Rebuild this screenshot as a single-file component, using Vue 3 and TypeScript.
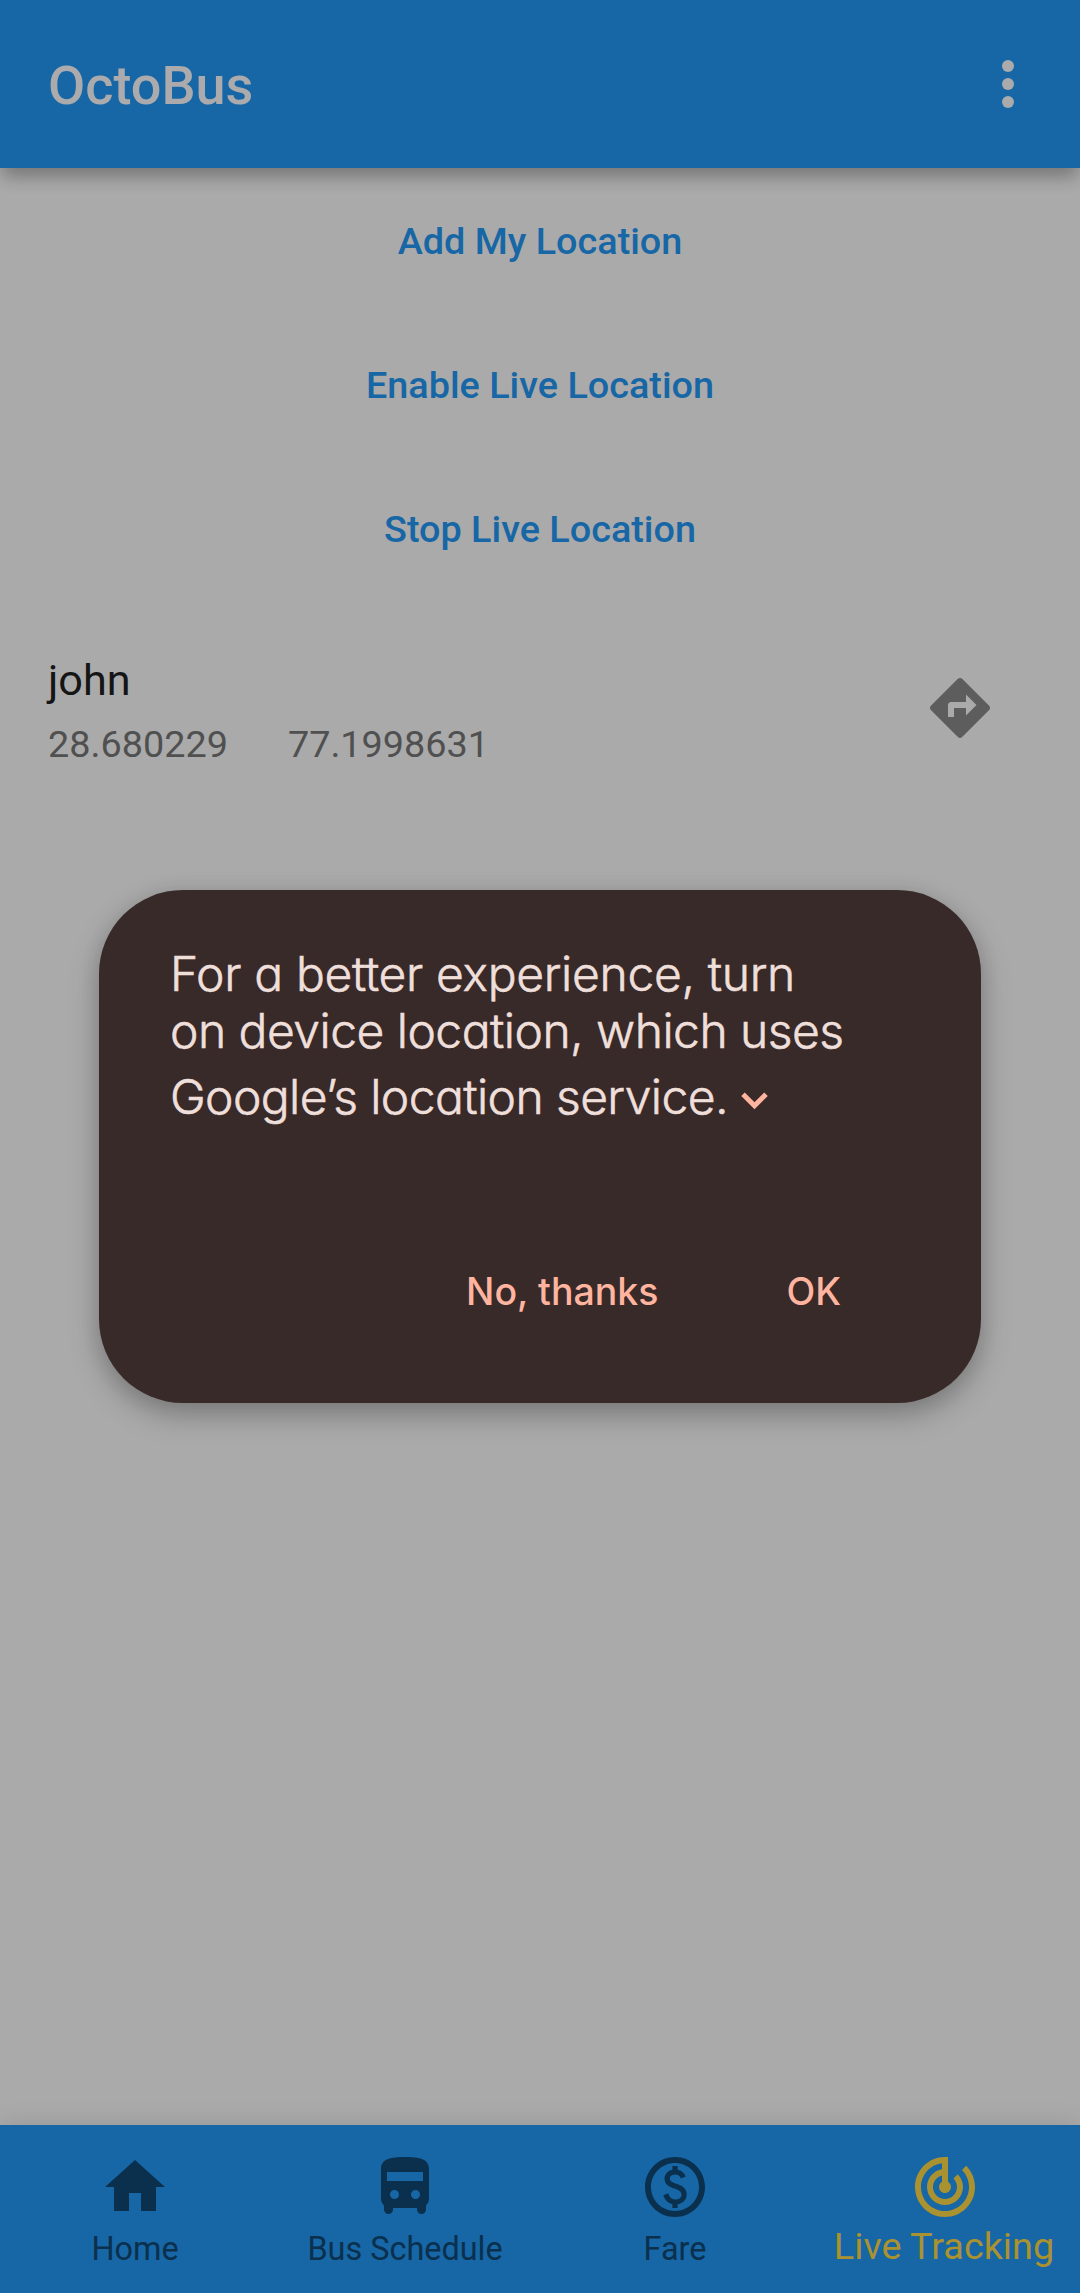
<script setup lang="ts">
interface NavItem {
  label: string
  icon: string
  active?: boolean
}

const actions: string[] = ['Add My Location', 'Enable Live Location', 'Stop Live Location']

const navItems: NavItem[] = [
  { label: 'Home', icon: 'M10 20v-6h4v6h5v-8h3L12 3 2 12h3v8z' },
  {
    label: 'Bus Schedule',
    icon: 'M12 2C7.58 2 4 2.5 4 6v9.8c0 .95.38 1.75 1 2.35v1.35c0 .83.67 1.5 1.5 1.5S8 20.33 8 19.5V19h8v.5c0 .83.67 1.5 1.5 1.5s1.5-.67 1.5-1.5v-1.35c.62-.6 1-1.4 1-2.35V6c0-3.5-3.58-4-8-4zM6 7h12v3H6zM8.5 16a1.5 1.5 0 1 1 0-3 1.5 1.5 0 0 1 0 3zM15.5 16a1.5 1.5 0 1 1 0-3 1.5 1.5 0 0 1 0 3z',
  },
  {
    label: 'Fare',
    icon: 'M12 2C6.48 2 2 6.48 2 12s4.48 10 10 10 10-4.48 10-10S17.52 2 12 2zm0 18c-4.41 0-8-3.59-8-8s3.59-8 8-8 8 3.59 8 8-3.59 8-8 8zm.89-8.9c-1.78-.59-2.64-.96-2.64-1.9 0-1.02 1.11-1.39 1.81-1.39 1.31 0 1.79.99 1.9 1.34l1.58-.67c-.15-.44-.82-1.91-2.66-2.23V5h-1.75v1.26c-2.6.56-2.62 2.85-2.62 2.96 0 2.27 2.25 2.91 3.35 3.31 1.58.56 2.28 1.07 2.28 2.03 0 1.13-1.05 1.61-1.98 1.61-1.82 0-2.34-1.87-2.4-2.09l-1.66.67c.63 2.19 2.28 2.78 3.02 2.96V19h1.75v-1.24c.52-.09 3.02-.59 3.02-3.22.01-1.39-.6-2.61-3-3.44z',
  },
  {
    label: 'Live Tracking',
    active: true,
    icon: 'M19.07 4.93l-1.41 1.41C19.1 7.79 20 9.79 20 12c0 4.42-3.58 8-8 8s-8-3.58-8-8c0-4.08 3.05-7.44 7-7.93v2.02C8.16 6.57 6 9.03 6 12c0 3.31 2.69 6 6 6s6-2.69 6-6c0-1.66-.67-3.16-1.76-4.24l-1.41 1.41C15.55 9.9 16 10.9 16 12c0 2.21-1.79 4-4 4s-4-1.79-4-4c0-1.86 1.28-3.41 3-3.86v2.14c-.6.35-1 .98-1 1.72 0 1.1.9 2 2 2s2-.9 2-2c0-.74-.4-1.38-1-1.72V2h-1C6.48 2 2 6.48 2 12s4.48 10 10 10 10-4.48 10-10c0-2.76-1.12-5.26-2.93-7.07z',
  },
]
</script>

<template>
  <div class="screen">
    <header class="app-bar">
      <h1>OctoBus</h1>
      <svg class="icon" viewBox="0 0 24 24">
        <circle cx="12" cy="6" r="2" />
        <circle cx="12" cy="12" r="2" />
        <circle cx="12" cy="18" r="2" />
      </svg>
    </header>

    <main class="body">
      <button v-for="action in actions" :key="action" class="text-button">{{ action }}</button>

      <div class="tile">
        <div class="tile-text">
          <div class="name">john</div>
          <div class="coords">
            <span>28.680229</span>
            <span>77.1998631</span>
          </div>
        </div>
        <svg class="icon directions" viewBox="0 0 24 24">
          <path
            d="M21.71 11.29l-9-9c-.39-.39-1.02-.39-1.41 0l-9 9c-.39.39-.39 1.02 0 1.41l9 9c.39.39 1.02.39 1.41 0l9-9c.39-.38.39-1.01 0-1.41zM14 14.5V12h-4v3H8v-4c0-.55.45-1 1-1h5V7.5l3.5 3.5-3.5 3.5z"
          />
        </svg>
      </div>
    </main>

    <nav class="bottom-nav">
      <div v-for="item in navItems" :key="item.label" class="nav-item" :class="{ active: item.active }">
        <svg class="icon" viewBox="0 0 24 24"><path fill-rule="evenodd" :d="item.icon" /></svg>
        <span class="nav-label">{{ item.label }}</span>
      </div>
    </nav>

    <div class="overlay">
      <section class="dialog" role="dialog">
        <div class="message">
          <div class="line first">For a better experience, turn</div>
          <div class="line">on device location, which uses</div>
          <div class="line last">
            <span>Google’s location service.</span>
            <svg class="chevron" viewBox="0 0 27 18"><path d="M2 2.2l11.5 11.5L25 2.2" /></svg>
          </div>
        </div>
        <div class="dialog-actions">
          <button>No, thanks</button>
          <button>OK</button>
        </div>
      </section>
    </div>
  </div>
</template>

<style>
body {
  margin: 0;
  background: #aaaaaa;
}
</style>

<style scoped>
.screen {
  position: relative;
  display: flex;
  flex-direction: column;
  width: 1080px;
  height: 2293px;
  overflow: hidden;
  background: #aaaaaa;
  font-family: Roboto, 'Liberation Sans', sans-serif;
}

button {
  padding: 0;
  border: 0;
  background: none;
  font: inherit;
  color: inherit;
}

.icon {
  display: block;
  width: 72px;
  height: 72px;
  flex: none;
  fill: currentColor;
}

.app-bar {
  display: flex;
  align-items: center;
  justify-content: space-between;
  box-sizing: border-box;
  height: 168px;
  padding: 0 36px 0 48px;
  background: #1766a5;
  color: #ababad;
  box-shadow: 0 12px 15px -3px rgba(0, 0, 0, 0.22), 0 3px 24px rgba(0, 0, 0, 0.12);
}

h1 {
  margin: 0;
  padding-top: 4px;
  font-size: 54px;
  font-weight: 500;
  line-height: 64px;
}

.body {
  flex: 1;
  display: flex;
  flex-direction: column;
}

.text-button {
  height: 144px;
  padding-top: 2px;
  font-size: 37.8px;
  font-weight: 500;
  line-height: 44px;
  color: #1766a5;
}

.tile {
  display: flex;
  align-items: center;
  justify-content: space-between;
  box-sizing: border-box;
  height: 216px;
  padding: 0 84px 0 48px;
}

.tile-text {
  padding-top: 6px;
}

.name {
  font-size: 43.2px;
  line-height: 50px;
  color: #151515;
}

.coords {
  display: flex;
  gap: 60px;
  margin-top: 16px;
  font-size: 37.8px;
  line-height: 44px;
  color: #505050;
}

.directions {
  color: #5d5d5d;
}

.bottom-nav {
  display: flex;
  height: 168px;
  background: #1766a5;
  box-shadow: 0 0 24px rgba(0, 0, 0, 0.12);
}

.nav-item {
  flex: 1;
  display: flex;
  flex-direction: column;
  align-items: center;
  box-sizing: border-box;
  padding-top: 26px;
  color: #0a304e;
}

.nav-label {
  margin-top: 7px;
  font-size: 32.4px;
  line-height: 38px;
  white-space: nowrap;
}

.active {
  color: #aa9230;
}

.active .nav-label {
  margin-top: 1px;
  margin-right: 2px;
  font-size: 37.8px;
  line-height: 44px;
}

.overlay {
  position: absolute;
  inset: 0;
  display: flex;
  align-items: center;
  justify-content: center;
}

.dialog {
  display: flex;
  flex-direction: column;
  justify-content: space-between;
  box-sizing: border-box;
  width: 882px;
  height: 513px;
  padding: 55px 140px 76px 71px;
  border-radius: 84px;
  background: #382a28;
  color: #efdfdb;
  font-family: Inter, 'Noto Sans', sans-serif;
  box-shadow: 0 12px 30px rgba(0, 0, 0, 0.26), 0 2px 20px rgba(0, 0, 0, 0.08);
}

.line {
  font-size: 48px;
  font-weight: 300;
  line-height: 57px;
  letter-spacing: -0.53px;
  font-feature-settings: 'cv11' 1;
  -webkit-text-stroke: 0.6px currentColor;
  white-space: nowrap;
}

.first {
  letter-spacing: -0.33px;
}

.last {
  display: flex;
  align-items: center;
  margin-top: 9px;
  letter-spacing: -0.6px;
}

.chevron {
  width: 27px;
  height: 18px;
  margin: 9px 0 0 13px;
  fill: none;
  stroke: #ffb4a0;
  stroke-width: 5;
}

.dialog-actions {
  display: flex;
  justify-content: flex-end;
  gap: 128px;
  font-size: 37.5px;
  font-weight: 500;
  line-height: 70px;
  color: #ffb4a0;
}
</style>
